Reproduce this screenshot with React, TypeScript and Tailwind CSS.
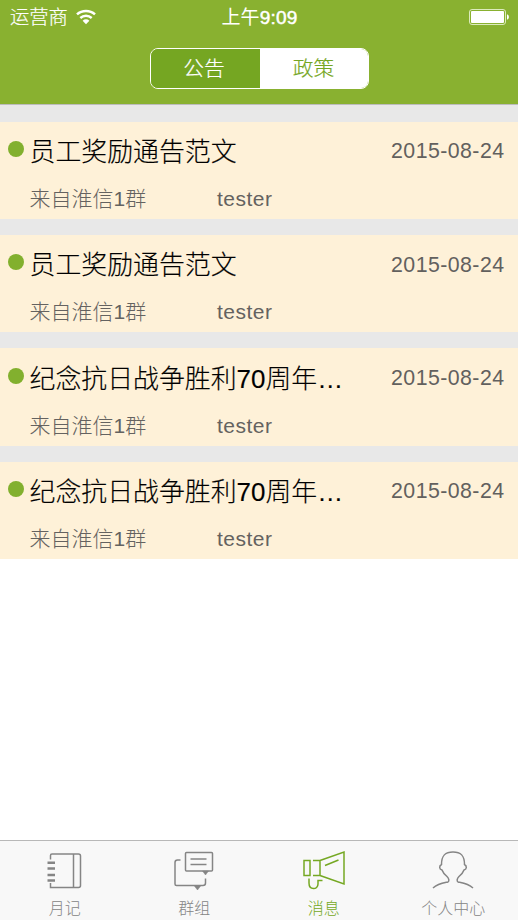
import type { ReactNode } from "react";

const font = "font-['Liberation_Sans','Noto_Sans_CJK_SC',sans-serif]";

const notices = [
  { title: "员工奖励通告范文", date: "2015-08-24" },
  { title: "员工奖励通告范文", date: "2015-08-24" },
  { title: "纪念抗日战争胜利70周年…", date: "2015-08-24" },
  { title: "纪念抗日战争胜利70周年…", date: "2015-08-24" },
];

function StatusBar() {
  return (
    <div className="grid h-8 grid-cols-3 items-center pl-[10px] pr-[9px] pt-[2px] text-white">
      <div className="flex items-center gap-2">
        <span className="text-[19.3px] font-light leading-8 [-webkit-text-stroke:0.2px_white]">运营商</span>
        <svg className="mb-[2px]" width="20" height="16" viewBox="0 0 20 16" fill="none" stroke="currentColor">
          <path d="M1 5.4C6 .8 14 .8 19 5.4" strokeWidth="2.5" />
          <path d="M4.3 9C7.600 6 12.400 6 15.700 9" strokeWidth="2.4" />
          <path d="M6.600 11.700C8.600 9.900 11.400 9.900 13.400 11.700L10 15.200Z" fill="currentColor" stroke="none" />
        </svg>
      </div>
      <span className="text-center text-[19px] leading-8 tracking-[0.2px]">
        上午<span className="[-webkit-text-stroke:0.5px_white]">9:09</span>
      </span>
      <svg className="mb-[2px] justify-self-end" width="40" height="16" viewBox="0 0 40 16">
        <rect x=".5" y=".5" width="36" height="15" rx="2.5" fill="none" stroke="#dcebbd" />
        <rect x="2" y="2" width="33" height="12" rx="1" fill="white" />
        <path d="M38 5.200C40.500 6 40.500 10 38 10.800Z" fill="white" />
      </svg>
    </div>
  );
}

function Notice({ title, date }: { title: string; date: string }) {
  return (
    <li className="flex h-[97.3px] flex-col bg-[#fef1d8] pl-2 pr-[13.5px]">
      <div className="flex h-[61.5px] items-center">
        <span className="mb-[7px] h-4 w-4 shrink-0 rounded-full bg-[#82b02e]" />
        <span className="ml-[5.5px] flex-1 whitespace-nowrap text-[25.9px] font-light text-black [-webkit-text-stroke:0.15px_black]">
          {title}
        </span>
        <span className="text-[21.3px] tracking-[0.45px] text-[#62605e]">{date}</span>
      </div>
      <div className="flex h-[31px] items-center pl-[21.5px] text-[21px] text-[#646260]">
        <span className="w-[187.5px] font-light">来自淮信1群</span>
        <span className="tracking-[0.5px]">tester</span>
      </div>
    </li>
  );
}

function Tab({ label, active = false, children }: { label: string; active?: boolean; children: ReactNode }) {
  return (
    <div className={`flex flex-col items-center pt-2 ${active ? "text-[#75a823]" : "text-[#858585]"}`}>
      <svg width="44" height="44" viewBox="0 0 44 44" fill="none" stroke="currentColor" strokeWidth="1.5">
        {children}
      </svg>
      <span className="text-[16px] font-light leading-[32px]">{label}</span>
    </div>
  );
}

export default function App() {
  return (
    <div className={`flex h-[920px] w-[518px] flex-col overflow-hidden bg-white ${font}`}>
      <header className="h-[104px] shrink-0 bg-[#89b130]">
        <StatusBar />
        <div className="mx-auto mt-4 flex h-[41px] w-[219px] overflow-hidden rounded-lg border-[1.5px] border-white text-center text-[20.7px] font-light leading-[39px]">
          <div className="w-[109px] bg-[#75a622] pr-[2px] text-white [-webkit-text-stroke:0.2px_white]">公告</div>
          <div className="flex-1 bg-white text-[#75a622] [-webkit-text-stroke:0.2px_#75a622]">政策</div>
        </div>
      </header>
      <main className="flex-1">
        <ul className="flex flex-col gap-4 border-t border-[#bcbcbc] bg-[#e8e8e8] pt-[16.7px]">
          {notices.map((notice, i) => (
            <Notice key={i} {...notice} />
          ))}
        </ul>
      </main>
      <nav className="grid h-20 shrink-0 grid-cols-4 border-t border-[#b8b8b8] bg-[#f8f8f8]">
        <Tab label="月记">
          <path d="M7.500 10.500V6.500Q7.500 5 9 5H35.500Q37.500 5 37.500 7V36.500Q37.500 38.500 35.500 38.500H7.500V34M30.500 5V38.500" />
          <path d="M4.500 13.800H12M4.500 19.500H12M4.500 26H12M4.500 31.500H12" strokeWidth="2.400" />
        </Tab>
        <Tab label="群组">
          <path d="M15 3.500H39.500Q40.500 3.500 40.500 4.500V21Q40.500 22 39.500 22H14.500Q13.500 22 13.500 21V4.500Q13.500 3.500 14.500 3.500ZM18.500 10H34.500M18.500 15.500H34.500M8.500 11H5.500Q3 11 3 13.500V35Q3 36.500 4.500 36.500H31Q33.500 36.500 33.500 34V29.500" />
          <path d="M30.500 22H36.500L33.500 26ZM22 36.500H29L25.500 41Z" fill="currentColor" strokeWidth=".5" />
        </Tab>
        <Tab label="消息" active>
          <path d="M8 11.500H2V26.500H8ZM11 11.500H18V26.500H11M18 11.500L42 3V35L18 26.500M23 16.500L36.500 11M7 29.500V34C7 41.500 16 41 16 35V31.500H20.500" />
        </Tab>
        <Tab label="个人中心">
          <path d="M2 39C7 34.500 12 34 17 33C18.500 32 18 29.500 16 27.500Q12 24 11 21C8 20 8 17 10.500 15.500C10.500 7 13.500 3 22 3S33.500 7 33.500 15.500C36 17 36 20 33 21Q32 24 28 27.500C26 29.500 25.500 32 27 33C32 34 37 34.500 42 39" />
        </Tab>
      </nav>
    </div>
  );
}
